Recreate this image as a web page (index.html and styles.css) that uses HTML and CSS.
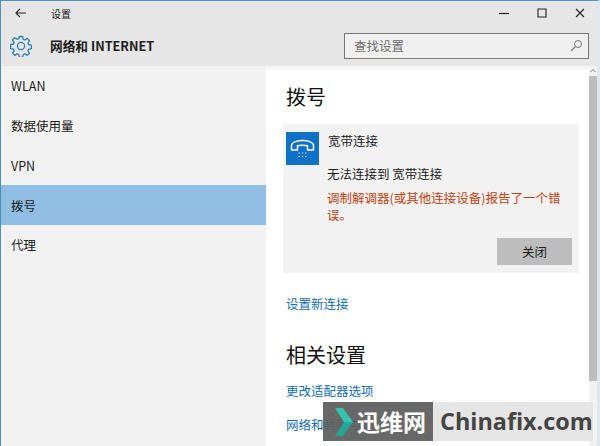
FILE: index.html
```html
<!DOCTYPE html>
<html lang="zh-CN">
<head>
<meta charset="utf-8">
<title>设置</title>
<link rel="stylesheet" href="styles.css">
</head>
<body>
<div class="window">
  <header class="titlebar">
    <svg class="back" width="11" height="10" viewBox="0 0 11 10"><path d="M5 .8.9 5 5 9.200M1 5h10" fill="none" stroke="#222" stroke-width="1.100"/></svg>
    <span class="app-title">设置</span>
    <div class="controls">
      <svg width="10" height="10" viewBox="0 0 10 10"><path d="M0 5.500h10" stroke="#222" stroke-width="1.200"/></svg>
      <svg width="10" height="10" viewBox="0 0 10 10"><path d="M1 1h8v8H1z" fill="none" stroke="#222" stroke-width="1.100"/></svg>
      <svg width="10" height="10" viewBox="0 0 10 10"><path d="m1 1 8 8M9 1 1 9" stroke="#222" stroke-width="1.100"/></svg>
    </div>
  </header>
  <div class="section-head">
    <svg class="gear" width="22" height="22" viewBox="0 0 22 22"><path d="M9.300 1.500h3.400l.5 2.800 1.700.7 2.400-1.600 2.200 2.300-1.600 2.300.7 1.700 2.800.5v3.400l-2.800.5-.7 1.700 1.600 2.400-2.300 2.200-2.300-1.600-1.700.7-.5 2.800H9.300l-.5-2.800-1.700-.7-2.400 1.600-2.200-2.300 1.600-2.300-.7-1.700-2.800-.5V9.500l2.800-.5.7-1.700-1.600-2.400 2.300-2.200 2.300 1.600 1.700-.7z" fill="none" stroke="#2a7fc0" stroke-width="1.300" stroke-linejoin="round"/><circle cx="11" cy="11" r="3.600" fill="none" stroke="#2a7fc0" stroke-width="1.200"/></svg>
    <h1 class="section-title">网络和 INTERNET</h1>
    <div class="search">
      <span class="search-text">查找设置</span>
      <svg width="13" height="13" viewBox="0 0 13 13"><circle cx="8" cy="5" r="3.500" fill="none" stroke="#777" stroke-width="1"/><path d="M5.500 7.500 1 12" stroke="#777" stroke-width="1.100"/></svg>
    </div>
  </div>
  <div class="body">
    <nav class="nav">
      <a class="nav-item">WLAN</a>
      <a class="nav-item">数据使用量</a>
      <a class="nav-item">VPN</a>
      <a class="nav-item selected">拨号</a>
      <a class="nav-item">代理</a>
    </nav>
    <main class="content">
      <h2 class="heading">拨号</h2>
      <section class="card">
        <div class="card-top">
          <div class="tile">
            <svg width="33" height="33" viewBox="0 0 33 33"><path d="M5.500 18v-4.500C5.500 10.500 10.500 8.500 16.500 8.500s11 2 11 5v4.500h-6v-4.200c-2-.8-8-.8-10 0V18z" fill="none" stroke="#fff" stroke-width="1.500" stroke-linejoin="round"/><path d="M12.500 21h1.500M15.800 21h1.500M19 21h1.500M12.500 24.500h1.500M15.800 24.500h1.500M19 24.500h1.500" stroke="#bcdaf3" stroke-width="1"/></svg>
          </div>
          <span class="card-name">宽带连接</span>
        </div>
        <p class="status">无法连接到 宽带连接</p>
        <p class="error">调制解调器(或其他连接设备)报告了一个错误。</p>
        <div class="actions"><button class="close-btn">关闭</button></div>
      </section>
      <a class="link new-conn">设置新连接</a>
      <h2 class="heading related">相关设置</h2>
      <a class="link adapter">更改适配器选项</a>
      <a class="link share">网络和共享中心</a>
    </main>
    <div class="scrollbar">
      <svg class="arrow" width="8" height="10" viewBox="0 0 8 10"><path d="m1.500 6 2.500-2.500L6.500 6" fill="none" stroke="#777" stroke-width="1"/></svg>
      <div class="thumb"></div>
    </div>
  </div>
  <div class="watermark">
    <div class="wm-dark">
      <svg width="18" height="28" viewBox="0 0 18 28"><path d="M0 0h8l10 14H9z" fill="#35c4b0"/><path d="M9 14h9L8 28H0z" fill="#25a596"/></svg>
      <span class="wm-cn">迅维网</span>
    </div>
    <div class="wm-light">Chinafix.com</div>
  </div>
</div>
</body>
</html>
```

FILE: styles.css
```css
* { box-sizing: border-box; }
html, body { margin: 0; height: 100%; }
body {
  font-family: "Noto Sans CJK SC", "Noto Sans", sans-serif;
  color: #1c1c1c;
  background: #fff;
}
.window {
  position: relative;
  width: 600px;
  height: 446px;
  display: flex;
  flex-direction: column;
  border-top: 1px solid #4a93b8;
  border-left: 1px solid #4a93b8;
  border-right: 3px solid #dbe8ef;
  overflow: hidden;
}
.titlebar {
  height: 24px;
  flex: none;
  display: flex;
  align-items: center;
  background: #e6e6e6;
  padding-left: 14px;
  padding-right: 12px;
}
.app-title { margin-left: 25px; font-size: 10px; }
.controls { margin-left: auto; display: flex; gap: 28px; align-items: center; }
.section-head {
  height: 41px;
  flex: none;
  display: flex;
  align-items: center;
  background: #e6e6e6;
  padding-left: 9px;
  padding-right: 8px;
}
.section-title { margin: 0 0 0 18px; font-size: 12.700px; font-weight: 700; }
.search {
  margin-left: auto;
  width: 245px;
  height: 26px;
  border: 1px solid #767676;
  background: #f0f0f0;
  display: flex;
  align-items: center;
  justify-content: space-between;
  padding: 0 5px 0 9px;
}
.search-text { font-size: 12.500px; color: #6d6d6d; }
.body { flex: 1; min-height: 0; display: flex; }
.nav { width: 265px; flex: none; background: #f2f2f2; }
.nav-item {
  display: flex;
  align-items: center;
  height: 39.750px;
  padding-left: 10px;
  font-size: 12.500px;
}
.nav-item.selected { background: #8fbde4; }
.content {
  flex: 1;
  min-width: 0;
  background: #fff;
  border-top: 4px solid #f6f6f6;
  padding: 12px 0 0 20px;
}
.heading { margin: 0; font-size: 20px; font-weight: 400; line-height: 30px; color: #111; }
.card {
  width: 296px;
  height: 149px;
  margin-top: 12px;
  margin-left: -3px;
  background: #f2f2f2;
  padding: 8px 7px 0 3px;
}
.card-top { display: flex; gap: 9px; }
.tile {
  width: 33px;
  height: 33px;
  flex: none;
  background: #0f70c8;
  display: flex;
  align-items: center;
  justify-content: center;
}
.card-name { font-size: 12.500px; line-height: 18px; }
.status { margin: 0 0 0 41px; font-size: 12.500px; line-height: 18px; }
.error { margin: 6px 0 0 41px; font-size: 12.500px; line-height: 17px; color: #c8410f; }
.actions { display: flex; justify-content: flex-end; margin-top: 15px; }
.close-btn {
  width: 75px;
  height: 27px;
  border: 0;
  padding: 0;
  background: #bdbdbd;
  color: #1c1c1c;
  font: inherit;
  font-size: 12.500px;
}
.link { display: block; font-size: 12.500px; line-height: 18px; color: #0f6cb8; }
.new-conn { margin-top: 22px; }
.related { margin-top: 27px; }
.adapter { margin-top: 12px; }
.share { margin-top: 16px; }
.scrollbar {
  width: 8px;
  flex: none;
  background: #f2f2f2;
  display: flex;
  flex-direction: column;
}
.arrow { flex: none; }
.thumb { height: 305px; background: #bdbdbd; }
.watermark {
  position: absolute;
  left: 322px;
  top: 401px;
  width: 270px;
  height: 39px;
  display: flex;
}
.wm-dark {
  width: 110px;
  flex: none;
  background: rgba(92, 92, 92, 0.93);
  display: flex;
  align-items: center;
  padding-left: 12px;
}
.wm-dark svg { margin-right: 4px; flex: none; }
.wm-cn { color: #fff; font-size: 23px; font-weight: 700; white-space: nowrap; line-height: 39px; }
.wm-light {
  flex: 1;
  background: rgba(228, 228, 228, 0.95);
  color: #444;
  font-family: "Open Sans", sans-serif;
  font-weight: 700;
  font-size: 23.400px;
  line-height: 39px;
  padding-left: 7px;
  white-space: nowrap;
}
```
